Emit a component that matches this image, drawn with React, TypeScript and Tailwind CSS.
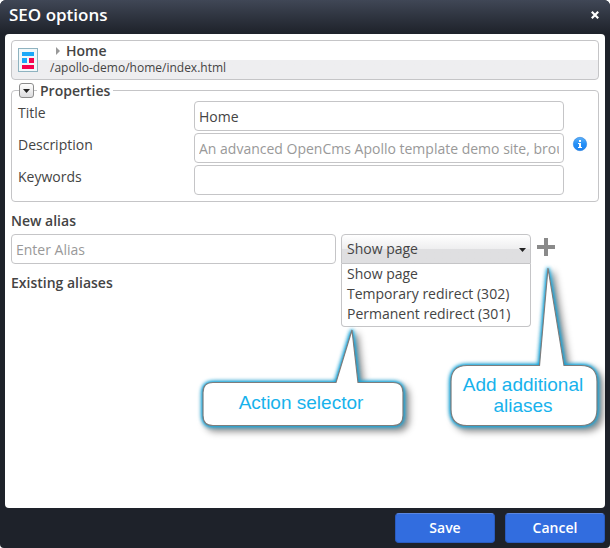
import { useState } from 'react';
import type { ReactNode } from 'react';

const ACTIONS = ['Show page', 'Temporary redirect (302)', 'Permanent redirect (301)'];

const inputClass =
  'block h-[30px] w-full min-w-0 rounded border border-[#c5c5c7] bg-white px-1 text-sm text-[#444] placeholder:text-[#999] placeholder:opacity-100 outline-none';

function PageIcon() {
  return (
    <svg width="20" height="24" viewBox="0 0 20 24" shapeRendering="crispEdges" className="shrink-0">
      <rect x="0.5" y="0.5" width="19" height="23" fill="#f1f8fa" stroke="#8fb3c0" />
      <rect x="4" y="4" width="12" height="4" fill="#1ba8f8" />
      <rect x="4" y="10" width="5" height="5" fill="#1ba8f8" />
      <rect x="11" y="10" width="5" height="5" fill="#f5054f" />
      <rect x="4" y="17" width="12" height="4" fill="#f5054f" />
    </svg>
  );
}

function InfoIcon() {
  return (
    <svg width="16" height="16" viewBox="0 0 16 16" className="block">
      <defs>
        <linearGradient id="info" x1="0" y1="0" x2="0" y2="1">
          <stop offset="0" stopColor="#5cb0f8" />
          <stop offset="0.5" stopColor="#2490f8" />
          <stop offset="1" stopColor="#1a80f0" />
        </linearGradient>
      </defs>
      <circle cx="8" cy="8" r="6.7" fill="url(#info)" stroke="#2a80dc" strokeWidth="0.6" />
      <path d="M7 4h2v2H7zM6 7h3v4h1v1H6v-1h1V8H6z" fill="#fff" />
    </svg>
  );
}

function Field({
  id,
  label,
  value,
  placeholder,
  children,
}: {
  id: string;
  label: string;
  value?: string;
  placeholder?: string;
  children?: ReactNode;
}) {
  return (
    <div className="flex items-start">
      <label htmlFor={id} className="w-44 shrink-0 pt-0.5 leading-5">
        {label}
      </label>
      <div className="min-w-0 flex-1">
        <input id={id} type="text" defaultValue={value} placeholder={placeholder} className={inputClass} />
      </div>
      <div className="w-7 shrink-0 pt-[3px] pl-2">{children}</div>
    </div>
  );
}

function CalloutShape({ d }: { d: string }) {
  return (
    <svg className="absolute inset-0 h-full w-full overflow-visible" aria-hidden="true">
      <path
        d={d}
        fill="#fff"
        stroke="#7d7d7d"
        strokeWidth="1.2"
        className="[filter:drop-shadow(0_0_2px_#12a5dc)_drop-shadow(0_0_1px_#12a5dc)_drop-shadow(4px_4px_3px_rgba(0,0,0,0.45))]"
      />
    </svg>
  );
}

export default function App() {
  const [action, setAction] = useState(ACTIONS[0]);

  return (
    <div className="flex min-h-screen flex-col rounded-t-md rounded-b bg-[#1e222a] px-[5px] pb-[5px] font-['Open_Sans','Noto_Sans',sans-serif] text-sm text-[#444]">
      <header className="-mx-[5px] flex h-[34px] items-center justify-between rounded-t-md bg-linear-to-b from-[#404756] to-[#1e222a] pr-2.5 pl-[9px] pb-1 text-white">
        <h1 className="text-[17px] leading-6 font-semibold">SEO options</h1>
        <button type="button" aria-label="Close" className="flex size-[10px] items-center justify-center">
          <svg width="10" height="10" viewBox="0 0 10 10">
            <path d="M1.8 1.8l6.4 6.4M8.2 1.8L1.8 8.2" stroke="#fff" strokeWidth="2.2" />
          </svg>
        </button>
      </header>

      <main className="flex-1 rounded bg-white p-1.5">
        <div className="flex h-10 items-center rounded border border-[#c5c5c7] bg-linear-to-b from-white from-50% to-[#eeeef0] to-50% px-1.5">
          <PageIcon />
          <div className="ml-3 pb-0.5">
            <div className="flex items-center pl-1.5 leading-[18px] font-semibold">
              <svg width="4" height="8" viewBox="0 0 4 8" className="mr-1.5">
                <path d="M0 0L4 4L0 8z" fill="#999" />
              </svg>
              Home
            </div>
            <div className="text-xs leading-4">/apollo-demo/home/index.html</div>
          </div>
        </div>

        <fieldset className="min-w-0 rounded border border-[#c5c5c7] px-1.5 pb-1.5">
          <legend className="flex h-[21px] items-center leading-5 font-semibold">
            <span className="h-px w-px bg-[#c5c5c7]" />
            <button
              type="button"
              aria-label="Collapse properties"
              className="flex size-[15px] items-center justify-center rounded-[3px] border border-[#8c8c8c] bg-linear-to-b from-white to-[#dcdcde]"
            >
              <svg width="7" height="4" viewBox="0 0 7 4">
                <path d="M0 0h7L3.5 4z" fill="#222" />
              </svg>
            </button>
            <span className="h-px w-[3px] bg-[#c5c5c7]" />
            <span className="px-[3px]">Properties</span>
          </legend>
          <div className="flex flex-col gap-0.5">
            <Field id="title" label="Title" value="Home" />
            <Field
              id="description"
              label="Description"
              placeholder="An advanced OpenCms Apollo template demo site, brought to you"
            >
              <InfoIcon />
            </Field>
            <Field id="keywords" label="Keywords" />
          </div>
        </fieldset>

        <label htmlFor="alias" className="mt-[9px] mb-[3px] block leading-5 font-semibold">
          New alias
        </label>
        <div className="flex items-start">
          <input id="alias" type="text" placeholder="Enter Alias" className={`${inputClass} flex-1`} />
          <div className="relative ml-[5px] w-[190px] shrink-0">
            <select
              aria-label="Action"
              value={action}
              onChange={(e) => setAction(e.target.value)}
              className="block h-[30px] w-full appearance-none rounded-t border border-[#c5c5c7] bg-linear-to-b from-white via-[#eeeeef] via-50% to-[#dfdfe1] to-50% px-[5px] text-sm outline-none"
            >
              {ACTIONS.map((a) => (
                <option key={a}>{a}</option>
              ))}
            </select>
            <svg width="7" height="4" viewBox="0 0 7 4" className="pointer-events-none absolute top-[14px] right-[5px]">
              <path d="M0 0h7L3.5 4z" fill="#222" />
            </svg>
            <ul
              role="listbox"
              aria-label="Actions"
              className="absolute inset-x-0 top-[30px] rounded-b border border-t-0 border-[#c5c5c7] bg-white pb-0.5"
            >
              {ACTIONS.map((a) => (
                <li
                  key={a}
                  role="option"
                  aria-selected={a === action}
                  onClick={() => setAction(a)}
                  className="px-[5px] leading-5 whitespace-nowrap"
                >
                  {a}
                </li>
              ))}
            </ul>
            <div className="absolute top-[86px] -left-[149px] h-[115px] w-[220px] pt-[72px] pr-0.5 text-center font-['Liberation_Sans',Arial,sans-serif] text-[19px] leading-[21px] text-[#17b2ec]">
              <CalloutShape d="M21 62.5H144L160 10L166 62.5H201Q211 62.5 211 72.5V95.5Q211 105.5 201 105.5H21Q11 105.5 11 95.5V72.5Q11 62.5 21 62.5z" />
              <span className="relative">Action selector</span>
            </div>
          </div>
          <div className="relative w-[68px] shrink-0 pt-1 pl-1.5">
            <button type="button" aria-label="Add alias" className="block">
              <svg width="18" height="18" viewBox="0 0 18 18" className="block">
                <path d="M7 0h4v7h7v4h-7v7H7v-7H0V7h7z" fill="#8a8a8a" />
              </svg>
            </button>
            <div className="absolute top-6 -left-[91px] h-[180px] w-[170px] pt-[116px] pr-1 text-center font-['Liberation_Sans',Arial,sans-serif] text-[19px] leading-[21px] text-[#17b2ec]">
              <CalloutShape d="M27 107.5H99.5L108 10L124 107.5H141Q157 107.5 157 123.5V151.5Q157 167.5 141 167.5H27Q11 167.5 11 151.5V123.5Q11 107.5 27 107.5z" />
              <span className="relative">
                Add additional
                <br />
                aliases
              </span>
            </div>
          </div>
        </div>

        <h2 className="mt-[9px] leading-5 font-semibold">Existing aliases</h2>
      </main>

      <footer className="flex justify-end gap-2.5 pt-[5px]">
        <button
          type="button"
          className="h-[30px] w-[100px] rounded border border-[#2a5cc0] border-t-[#5a86e0] bg-[#326ddf] font-semibold text-white"
        >
          Save
        </button>
        <button
          type="button"
          className="h-[30px] w-[100px] rounded border border-[#2a5cc0] border-t-[#5a86e0] bg-[#326ddf] font-semibold text-white"
        >
          Cancel
        </button>
      </footer>
    </div>
  );
}
